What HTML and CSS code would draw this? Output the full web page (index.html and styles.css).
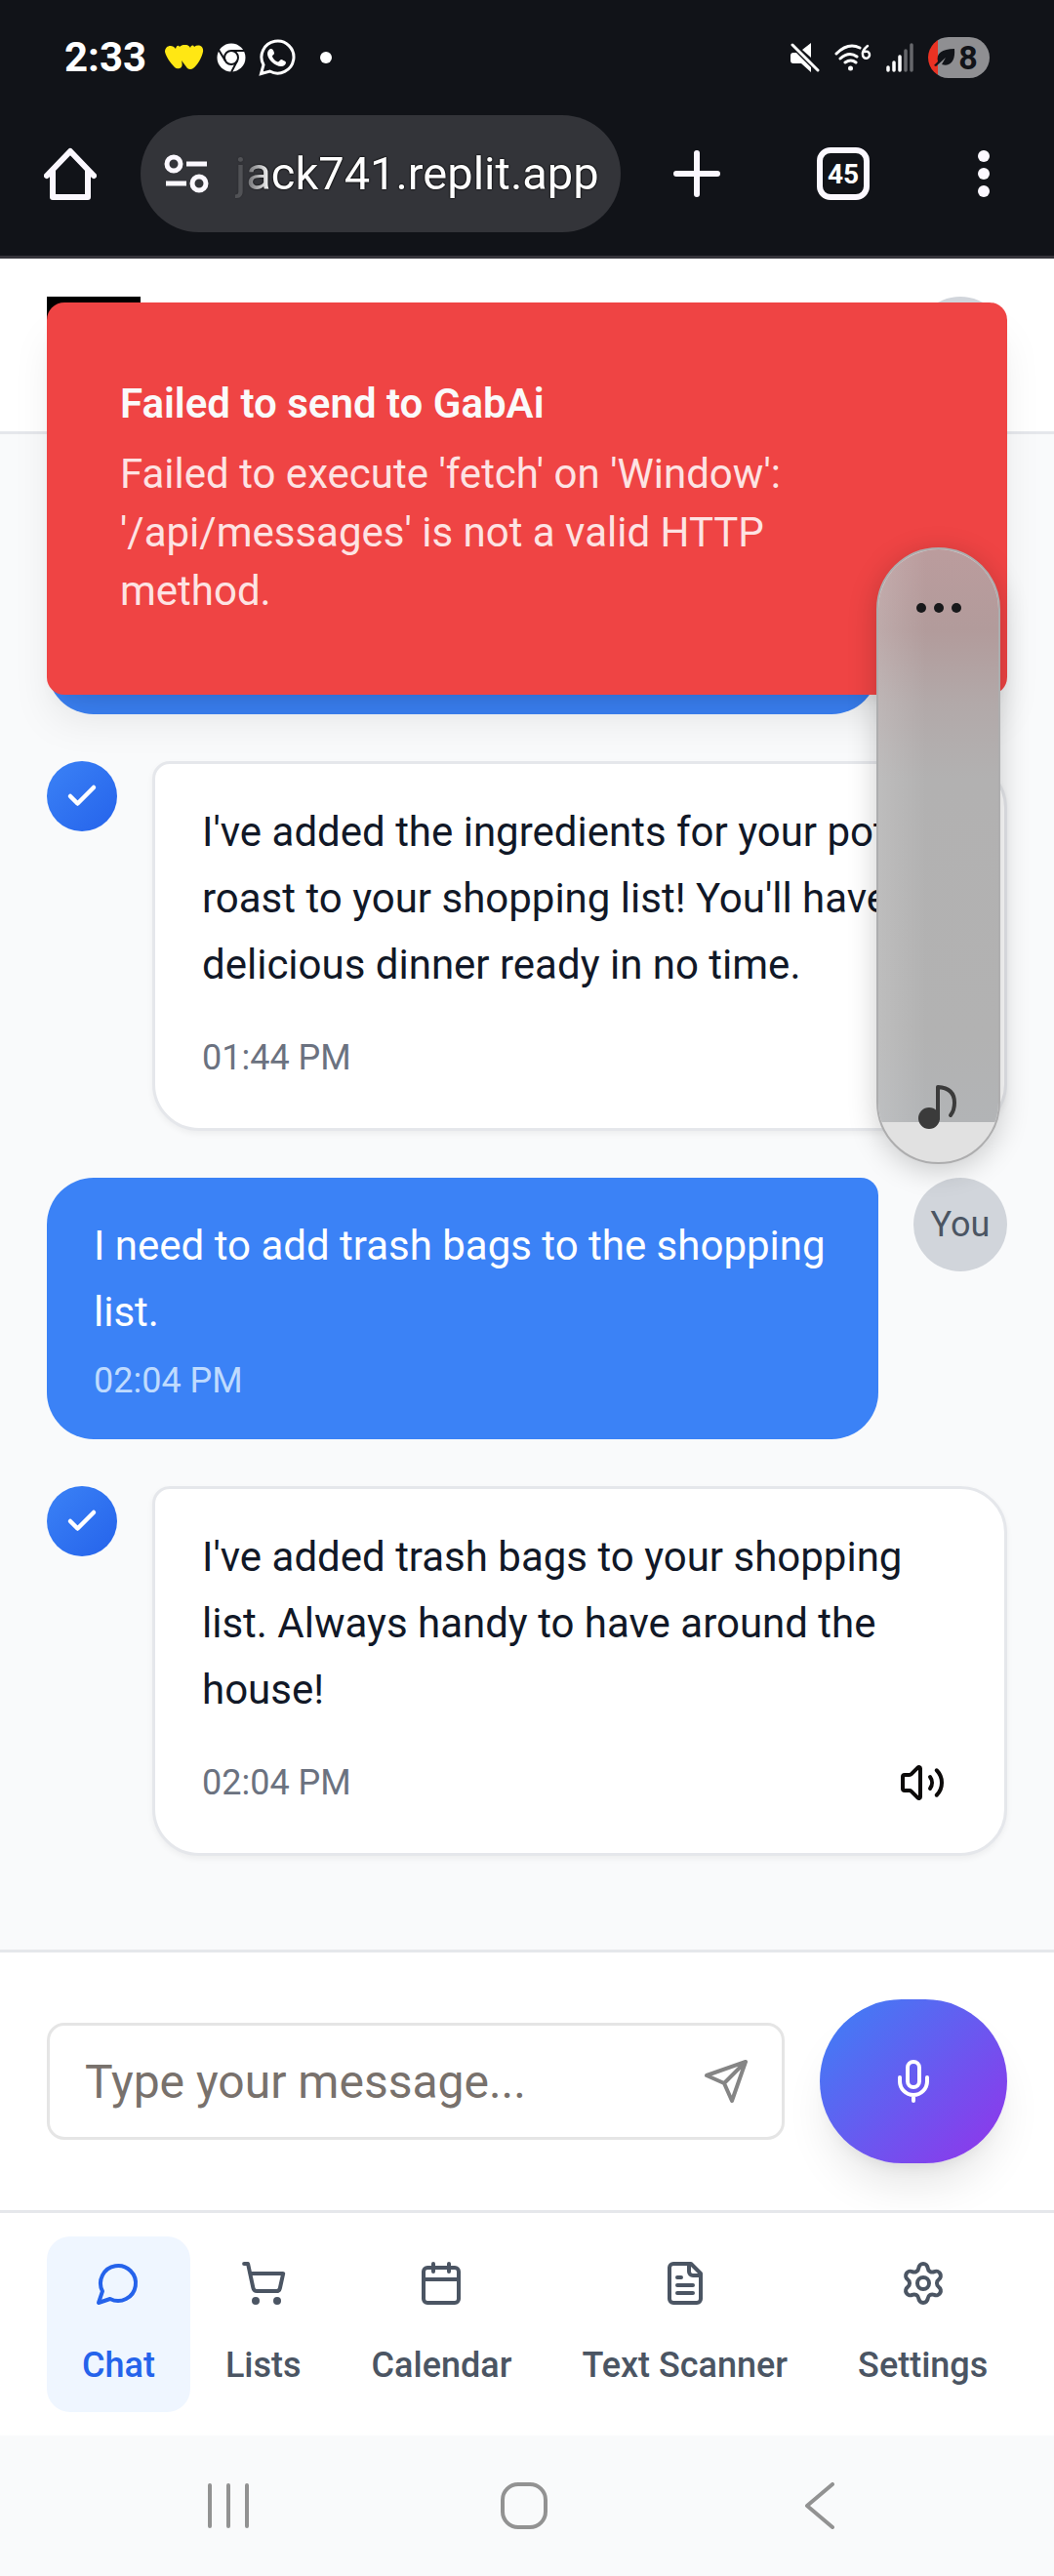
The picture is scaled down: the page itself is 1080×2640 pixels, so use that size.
FILE: index.html
```html
<!DOCTYPE html>
<html lang="en">
<head>
<meta charset="utf-8">
<meta name="viewport" content="width=device-width, initial-scale=1">
<title>GabAi Chat</title>
<link rel="stylesheet" href="styles.css">
</head>
<body>
<div class="screen">
  <div class="chrome">
    <div class="status">
      <div class="status-left">
        <span class="clock">2:33</span>
        <svg viewBox="0 0 40 26" width="40" height="26" aria-hidden="true"><path fill="#ffe714" d="M0 7C0 0 8-1 11 4C12 0 14 0 15 2C18-1 24-1 26 3C27 0 29 0 30 2C34-1 40 1 39 7C38 13 33 21 29 24Q26 26 23 24L17 16C18 20 18 23 15 24Q12 25 10 23C6 19 1 12 0 7Z"/></svg>
        <svg viewBox="0 0 30 30" width="30" height="30" aria-hidden="true"><circle cx="15" cy="15" r="14.500" fill="#fff"/><g stroke="#111318" stroke-width="2" fill="none"><circle cx="15" cy="15" r="7"/><path d="M15 8H28.500M9 18.500L2 7M21 18.500L15 30"/></g></svg>
        <svg viewBox="0 0 38 38" width="38" height="38" aria-hidden="true"><path fill="none" stroke="#fff" stroke-width="3" d="M2.500 35.500L5 26.500A16.500 16.500 0 1 1 11.500 33Z"/><path fill="#fff" d="M13 10c-2 0-4 2-4 5 0 6 8 13 14 13 3 0 5-2 5-4 0-1-4-3-5-3s-2 2.500-3 2.500c-2 0-6-4-6-6 0-1 2-1.500 2-3C16 13 14.500 10 13 10Z"/></svg>
        <span class="more-dot"></span>
      </div>
      <div class="status-right">
        <svg viewBox="0 0 30 30" width="30" height="30" aria-hidden="true"><path fill="#fff" d="M3 10H6L21 25V30L11 21H3Q0 21 0 18V13Q0 10 3 10ZM12 7L21 0V15Z"/><path d="M2 2L28 28" stroke="#fff" stroke-width="3" stroke-linecap="round"/></svg>
        <svg viewBox="0 0 38 28" width="38" height="28" aria-hidden="true"><g fill="none" stroke="#fff" stroke-width="3" stroke-linecap="round"><path d="M2 10Q14-2 26 4M6 15Q15 7 23 13M11 19Q17 15 22 19"/><path d="M34 2Q28 7 29 11A3.500 3.500 0 1 0 31 8" stroke-width="2.500"/></g><circle cx="16.500" cy="25" r="2.500" fill="#fff"/></svg>
        <svg viewBox="0 0 28 30" width="28" height="30" aria-hidden="true"><g stroke-width="3.500" stroke-linecap="round" stroke="#fff"><path d="M2 25V28M8 20V28M14 14V28"/><path d="M20 8V28M26 2V28" stroke="#66676b"/></g></svg>
        <span class="battery">
          <svg viewBox="0 0 22 20" width="22" height="20" aria-hidden="true"><path fill="#111318" d="M4 14C2 6 8 1 21 1C22 12 18 20 8 17L12 10L2 19L0 18Z"/></svg>
          <span>8</span>
        </span>
      </div>
    </div>
    <div class="toolbar">
      <button class="tool" aria-label="Home"><svg viewBox="0 0 54 54" width="54" height="54"><path d="M3 29L27 4L51 29M9 24V51H45V24" fill="none" stroke="#fbf8ff" stroke-width="6" stroke-linecap="round" stroke-linejoin="round"/></svg></button>
      <div class="omnibox">
        <svg viewBox="0 0 46 40" width="46" height="40" aria-hidden="true"><g fill="none" stroke="#fbf8ff" stroke-width="5"><circle cx="10" cy="10" r="7"/><path d="M23 10H44M2 30H23"/><circle cx="36" cy="30" r="7"/></g></svg>
        <span class="url">jack741.replit.app</span>
      </div>
      <div class="tools">
        <button class="tool" aria-label="New tab"><svg viewBox="0 0 48 48" width="48" height="48"><path d="M24 3V45M3 24H45" stroke="#fbf8ff" stroke-width="6" stroke-linecap="round"/></svg></button>
        <button class="tool tabs" aria-label="45 open tabs"><span>45</span></button>
        <button class="tool menu" aria-label="Menu"><svg viewBox="0 0 12 48" width="12" height="48"><g fill="#fbf8ff"><circle cx="6" cy="6" r="6"/><circle cx="6" cy="24" r="6"/><circle cx="6" cy="42" r="6"/></g></svg></button>
      </div>
    </div>
  </div>

  <div class="app">
    <header class="header">
      <span class="logo"></span>
      <span class="avatar"></span>
    </header>

    <main class="chat">
      <div class="row">
        <div class="bubble user empty"></div>
        <span class="spacer"></span>
      </div>
      <div class="row">
        <span class="bot"><svg viewBox="0 0 24 24" width="36" height="36"><path d="M20 6L9 17L4 12"/></svg></span>
        <div class="bubble assistant">
          <p>I've added the ingredients for your pot roast to your shopping list! You'll have a delicious dinner ready in no time.</p>
          <div class="meta"><time>01:44 PM</time></div>
        </div>
      </div>
      <div class="row">
        <div class="bubble user">
          <p>I need to add trash bags to the shopping list.</p>
          <time>02:04 PM</time>
        </div>
        <span class="avatar">You</span>
      </div>
      <div class="row">
        <span class="bot"><svg viewBox="0 0 24 24" width="36" height="36"><path d="M20 6L9 17L4 12"/></svg></span>
        <div class="bubble assistant">
          <p>I've added trash bags to your shopping list. Always handy to have around the house!</p>
          <div class="meta"><time>02:04 PM</time>
            <button class="speak" aria-label="Read aloud"><svg viewBox="0 0 24 24" width="48" height="48"><path d="M11 4.702a.705.705 0 0 0-1.203-.498L6.413 7.587A1.400 1.400 0 0 1 5.416 8H3a1 1 0 0 0-1 1v6a1 1 0 0 0 1 1h2.416a1.400 1.400 0 0 1 .997.413l3.383 3.384A.705.705 0 0 0 11 19.298zM16 9a5 5 0 0 1 0 6M19.364 18.364a9 9 0 0 0 0-12.728"/></svg></button>
          </div>
        </div>
      </div>
    </main>

    <form class="composer">
      <div class="field">
        <input type="text" aria-label="Message" placeholder="Type your message...">
        <button type="button" class="send" aria-label="Send"><svg viewBox="0 0 24 24" width="48" height="48"><path d="M22 2L15 22L11 13L2 9ZM22 2L11 13"/></svg></button>
      </div>
      <button type="button" class="mic" aria-label="Record"><svg viewBox="0 0 24 24" width="48" height="48"><path d="M12 2a3 3 0 0 0-3 3v7a3 3 0 0 0 6 0V5a3 3 0 0 0-3-3ZM19 10v2a7 7 0 0 1-14 0v-2M12 19V22"/></svg></button>
    </form>

    <nav class="tabbar">
      <a href="#chat" class="tab active"><svg viewBox="0 0 24 24" width="48" height="48"><path d="M7.900 20A9 9 0 1 0 4 16.100L2 22Z"/></svg>Chat</a>
      <a href="#lists" class="tab"><svg viewBox="0 0 24 24" width="48" height="48"><circle cx="8" cy="21" r="1"/><circle cx="19" cy="21" r="1"/><path d="M2.050 2.050h2l2.660 12.420a2 2 0 0 0 2 1.580h9.780a2 2 0 0 0 1.950-1.570l1.650-7.430H5.120"/></svg>Lists</a>
      <a href="#calendar" class="tab"><svg viewBox="0 0 24 24" width="48" height="48"><path d="M8 2v4M16 2v4M3 10h18"/><rect width="18" height="18" x="3" y="4" rx="2"/></svg>Calendar</a>
      <a href="#scanner" class="tab"><svg viewBox="0 0 24 24" width="48" height="48"><path d="M15 2H6a2 2 0 0 0-2 2v16a2 2 0 0 0 2 2h12a2 2 0 0 0 2-2V7ZM14 2v4a2 2 0 0 0 2 2h4M10 9H8M16 13H8M16 17H8"/></svg>Text Scanner</a>
      <a href="#settings" class="tab"><svg viewBox="0 0 24 24" width="48" height="48"><path d="M9.671 4.136a2.340 2.340 0 0 1 4.659 0 2.340 2.340 0 0 0 3.319 1.915 2.340 2.340 0 0 1 2.330 4.033 2.340 2.340 0 0 0 0 3.831 2.340 2.340 0 0 1-2.330 4.033 2.340 2.340 0 0 0-3.319 1.915 2.340 2.340 0 0 1-4.659 0 2.340 2.340 0 0 0-3.320-1.915 2.340 2.340 0 0 1-2.330-4.033 2.340 2.340 0 0 0 0-3.831A2.340 2.340 0 0 1 6.350 6.051a2.340 2.340 0 0 0 3.319-1.915"/><circle cx="12" cy="12" r="3"/></svg>Settings</a>
    </nav>

    <div class="toast" role="alert">
      <strong>Failed to send to GabAi</strong>
      <p>Failed to execute 'fetch' on 'Window': '/api/messages' is not a valid HTTP method.</p>
    </div>
  </div>

  <div class="sysnav">
    <button aria-label="Recent apps"><svg viewBox="0 0 48 48" width="48" height="48"><path d="M5 3V45M24 3V45M43 3V45"/></svg></button>
    <button aria-label="Home screen"><svg viewBox="0 0 48 48" width="48" height="48"><rect x="2" y="2" width="44" height="44" rx="16"/></svg></button>
    <button aria-label="Back"><svg viewBox="0 0 48 48" width="48" height="48"><path d="M37 2L11 24L37 46"/></svg></button>
  </div>

  <div class="volume">
    <div class="volume-level"></div>
    <svg class="volume-dots" viewBox="0 0 48 12" width="48" height="12" aria-hidden="true"><g fill="#18191b"><circle cx="6" cy="6" r="5"/><circle cx="24" cy="6" r="5"/><circle cx="42" cy="6" r="5"/></g></svg>
    <svg class="volume-note" viewBox="0 0 44 46" width="44" height="46" aria-hidden="true"><circle cx="12" cy="35" r="11" fill="#3b3b3b"/><path d="M21 35V3Q38 4 38 19Q38 27 34 32" fill="none" stroke="#3b3b3b" stroke-width="4" stroke-linecap="round" stroke-linejoin="round"/></svg>
  </div>
</div>
</body>
</html>
```

FILE: styles.css
```css
* { box-sizing: border-box; }

body {
  margin: 0;
  background: #f9fafb;
  font-family: Roboto, "Liberation Sans", sans-serif;
  color: #111827;
}

p { margin: 0; }

button {
  padding: 0;
  border: 0;
  background: none;
  font: inherit;
  color: inherit;
}

svg { display: block; flex: none; }

.screen {
  position: relative;
  display: flex;
  flex-direction: column;
  min-height: 100vh;
}

/* Browser chrome */
.chrome {
  background: #111318;
  border-bottom: 3px solid #35343a;
  padding-bottom: 24px;
}

.status {
  display: flex;
  justify-content: space-between;
  align-items: center;
  height: 118px;
  padding: 0 66px;
}

.status-left, .status-right { display: flex; align-items: center; }
.status-left { gap: 13px; }
.status-right { gap: 15px; }

.clock {
  margin-right: 6px;
  font-size: 42px;
  font-weight: 700;
  line-height: 48px;
  color: #fff;
}

.more-dot {
  width: 12px;
  height: 12px;
  margin-left: 12px;
  border-radius: 50%;
  background: #fff;
}

.battery {
  display: flex;
  align-items: center;
  justify-content: center;
  gap: 3px;
  width: 63px;
  height: 42px;
  padding-right: 6px;
  border-radius: 21px;
  background: linear-gradient(90deg, #ea3223 10px, #8f8f92 10px);
  font-size: 34px;
  font-weight: 700;
  color: #111318;
}

.toolbar {
  display: flex;
  align-items: center;
  padding: 0 66px 0 45px;
}

.omnibox {
  display: flex;
  align-items: center;
  gap: 27px;
  flex: none;
  width: 492px;
  height: 120px;
  margin: 0 54px 0 45px;
  padding: 0 24px;
  border-radius: 60px;
  background: #333439;
}

.url {
  flex: none;
  font-size: 47px;
  line-height: 64px;
  color: #fff;
  white-space: nowrap;
  text-shadow: 0 0 2px #000, 0 0 2px #000;
  mask-image: linear-gradient(90deg, rgb(0 0 0 / 15%) 8px, #000 36px);
}

.tools {
  flex: 1;
  display: flex;
  align-items: center;
  justify-content: space-between;
}

.menu { padding-left: 12px; }

.tabs {
  display: grid;
  place-items: center;
  width: 54px;
  height: 54px;
  border: 6px solid #fbf8ff;
  border-radius: 14px;
  font-size: 28px;
  font-weight: 700;
  color: #fff;
}

/* App */
.app {
  position: relative;
  flex: 1;
  display: flex;
  flex-direction: column;
}

.header {
  display: flex;
  justify-content: space-between;
  padding: 39px 48px 42px;
  border-bottom: 3px solid #e5e7eb;
  background: #fff;
}

.logo { width: 96px; height: 96px; background: #000; }

.avatar {
  display: grid;
  place-items: center;
  flex: none;
  width: 96px;
  height: 96px;
  border-radius: 50%;
  background: #d1d5db;
  font-size: 36px;
  color: #4b5563;
}

.chat {
  flex: 1;
  display: flex;
  flex-direction: column;
  gap: 48px;
  padding: 48px 48px 96px;
}

.row { display: flex; align-items: flex-start; gap: 36px; }
.spacer { flex: none; width: 96px; }

.bot {
  display: grid;
  place-items: center;
  flex: none;
  width: 72px;
  height: 72px;
  border-radius: 50%;
  background: linear-gradient(135deg, #3b82f6, #2563eb);
  color: #fff;
}

.bot svg, .speak svg, .send svg, .mic svg, .tab svg {
  fill: none;
  stroke: currentColor;
  stroke-width: 2;
  stroke-linecap: round;
  stroke-linejoin: round;
}

.bot svg { stroke-width: 3; }

.bubble {
  flex: 1;
  padding: 36px 48px;
  border-radius: 48px;
  font-size: 42px;
  line-height: 68px;
}

.bubble time { display: block; font-size: 36px; line-height: 48px; }

.user { border-top-right-radius: 18px; background: #3b82f6; color: #fff; }
.user time { margin-top: 12px; color: #bfdbfe; }
.empty { min-height: 239px; }

.assistant {
  border: 3px solid #e5e7eb;
  border-top-left-radius: 18px;
  background: #fff;
  box-shadow: 0 3px 6px rgb(0 0 0 / 5%);
}

.meta {
  display: flex;
  align-items: center;
  justify-content: space-between;
  height: 72px;
  margin-top: 25px;
  color: #6b7280;
}

.speak { padding: 0 12px; color: #0c0a09; }

.composer {
  display: flex;
  align-items: center;
  gap: 36px;
  padding: 48px;
  border-top: 3px solid #e5e7eb;
  background: #fff;
}

.field {
  flex: 1;
  display: flex;
  align-items: center;
  height: 120px;
  padding: 0 33px 0 36px;
  border: 3px solid #e5e5e5;
  border-radius: 18px;
}

.field input {
  flex: 1;
  min-width: 0;
  padding: 0;
  border: 0;
  outline: 0;
  background: none;
  font: inherit;
  font-size: 48px;
}

.field input::placeholder { color: #78716c; opacity: 1; }
.send { color: #858585; }

.mic {
  display: grid;
  place-items: center;
  flex: none;
  width: 192px;
  height: 168px;
  border-radius: 84px;
  background: linear-gradient(135deg, #3b82f6, #9333ea);
  box-shadow: 0 30px 45px -9px rgb(0 0 0 / 10%), 0 12px 18px -12px rgb(0 0 0 / 10%);
  color: #fff;
}

.tabbar {
  position: relative;
  display: flex;
  padding: 24px 48px;
  border-top: 3px solid #e5e7eb;
  background: #fff;
}

.tab {
  display: flex;
  flex-direction: column;
  align-items: center;
  gap: 36px;
  padding: 24px 36px;
  border-radius: 24px;
  font-size: 36px;
  font-weight: 500;
  line-height: 48px;
  color: #4b5563;
  text-decoration: none;
  white-space: nowrap;
}

.active { background: #eff6ff; color: #2563eb; }

.toast {
  position: absolute;
  top: 45px;
  left: 48px;
  right: 48px;
  padding: 74px 174px 76px 75px;
  border-radius: 18px;
  background: #ef4444;
  box-shadow: 0 30px 45px -9px rgb(0 0 0 / 10%), 0 12px 18px -12px rgb(0 0 0 / 10%);
  font-size: 42px;
  line-height: 60px;
  color: #fafafa;
}

.toast strong { display: block; font-weight: 600; }
.toast p { margin-top: 12px; color: #fde3e3; }

/* System navigation */
.sysnav {
  display: flex;
  align-items: center;
  height: 144px;
  padding: 0 89px 0 83px;
  background: #f9fafb;
}

.sysnav button { flex: 1; display: grid; place-items: center; }

.sysnav svg {
  fill: none;
  stroke: #929292;
  stroke-width: 4;
  stroke-linecap: round;
  stroke-linejoin: round;
}

/* Volume panel floats over everything */
.volume {
  position: absolute;
  top: 561px;
  right: 55px;
  display: flex;
  flex-direction: column;
  align-items: center;
  justify-content: space-between;
  width: 127px;
  height: 632px;
  padding: 54px 0 34px;
  overflow: hidden;
  border: 2px solid #adadae;
  border-radius: 64px;
  background: #e1e1e1;
  box-shadow: 0 6px 30px rgb(0 0 0 / 20%);
}

.volume-level {
  position: absolute;
  inset: 0 0 41px;
  background:
    linear-gradient(90deg, rgb(255 255 255 / 15%), transparent 40%),
    linear-gradient(180deg, #bb9c9d, #b29b9b 14%, #b2a9a9 27%, #b2b1b1 40%, #b2b2b2 85%, #b2b4b6);
}

.volume-dots, .volume-note { position: relative; }
```
